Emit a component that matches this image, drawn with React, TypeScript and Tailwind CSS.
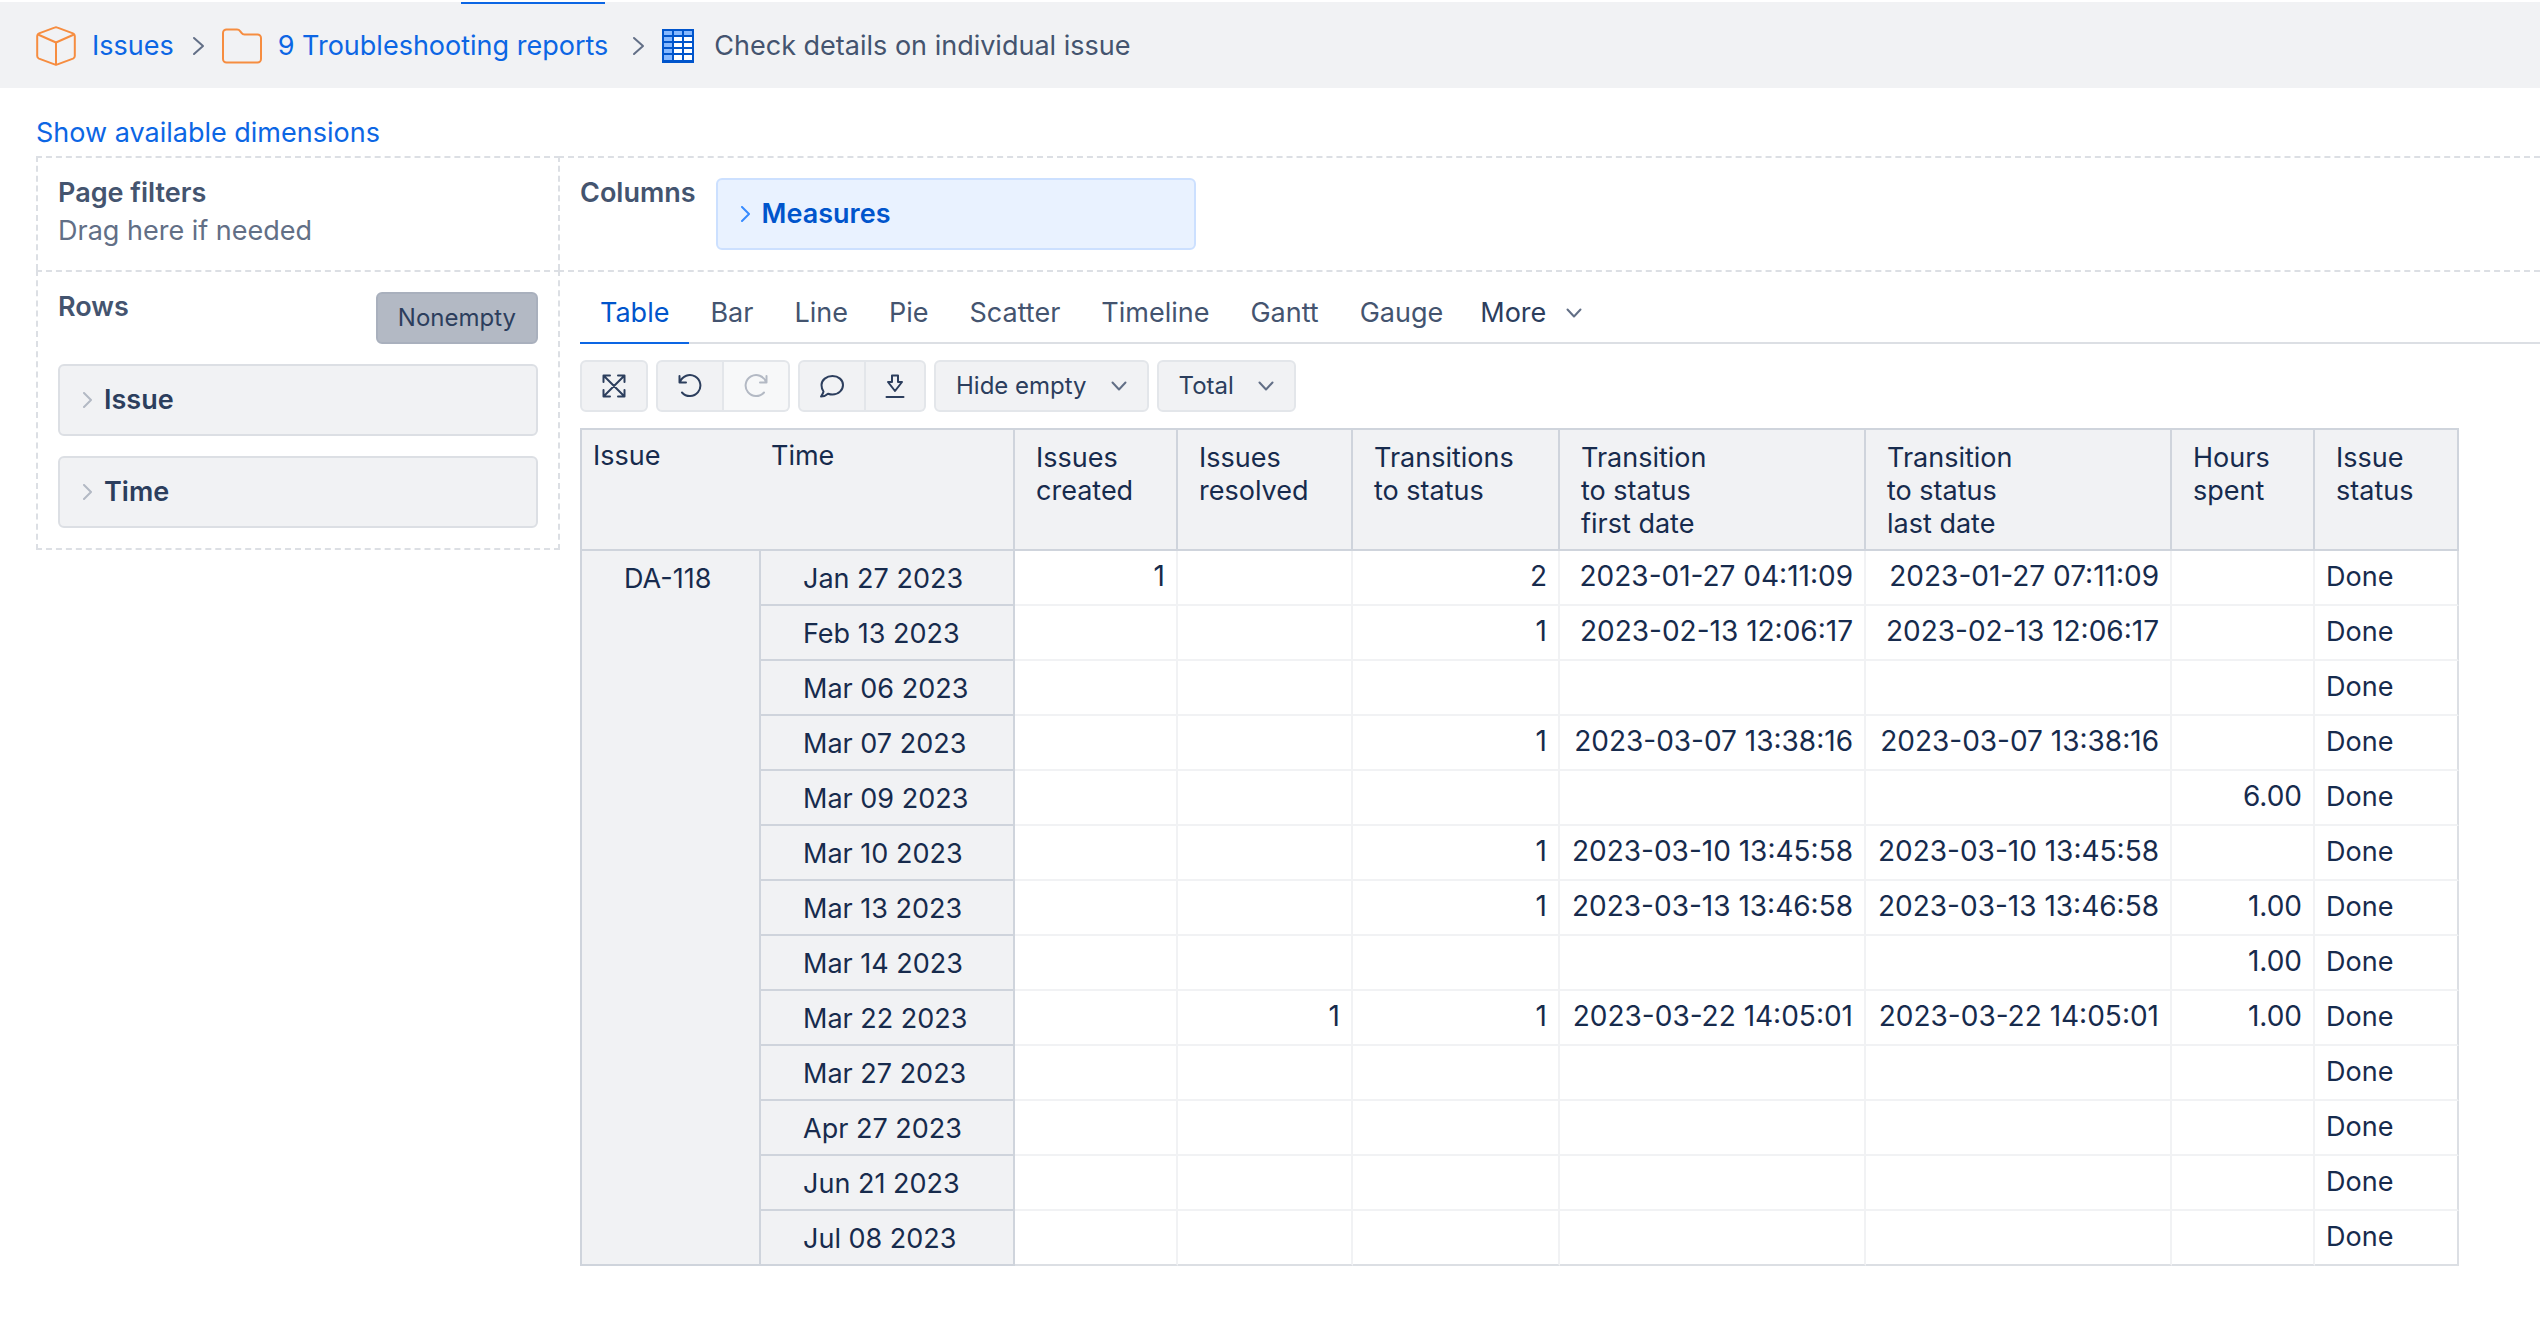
import { useState } from "react";
import type { ReactNode } from "react";

const TABS = ["Table", "Bar", "Line", "Pie", "Scatter", "Timeline", "Gantt", "Gauge"];

const COLUMNS = [
  ["Issues", "created"],
  ["Issues", "resolved"],
  ["Transitions", "to status"],
  ["Transition", "to status", "first date"],
  ["Transition", "to status", "last date"],
  ["Hours", "spent"],
  ["Issue", "status"],
];

// time, created, resolved, transitions, first date, last date, hours
const ROWS = [
  ["Jan 27 2023", "1", "", "2", "2023-01-27 04:11:09", "2023-01-27 07:11:09", ""],
  ["Feb 13 2023", "", "", "1", "2023-02-13 12:06:17", "2023-02-13 12:06:17", ""],
  ["Mar 06 2023", "", "", "", "", "", ""],
  ["Mar 07 2023", "", "", "1", "2023-03-07 13:38:16", "2023-03-07 13:38:16", ""],
  ["Mar 09 2023", "", "", "", "", "", "6.00"],
  ["Mar 10 2023", "", "", "1", "2023-03-10 13:45:58", "2023-03-10 13:45:58", ""],
  ["Mar 13 2023", "", "", "1", "2023-03-13 13:46:58", "2023-03-13 13:46:58", "1.00"],
  ["Mar 14 2023", "", "", "", "", "", "1.00"],
  ["Mar 22 2023", "", "1", "1", "2023-03-22 14:05:01", "2023-03-22 14:05:01", "1.00"],
  ["Mar 27 2023", "", "", "", "", "", ""],
  ["Apr 27 2023", "", "", "", "", "", ""],
  ["Jun 21 2023", "", "", "", "", "", ""],
  ["Jul 08 2023", "", "", "", "", "", ""],
];

function Svg({ className, viewBox, children }: { className: string; viewBox: string; children: ReactNode }) {
  return (
    <svg
      className={className}
      viewBox={viewBox}
      fill="none"
      stroke="currentColor"
      strokeWidth="2"
      strokeLinecap="round"
      strokeLinejoin="round"
      aria-hidden="true"
    >
      {children}
    </svg>
  );
}

function ChevronDown({ className }: { className: string }) {
  return (
    <Svg className={`h-4 w-4 ${className}`} viewBox="0 0 16 16">
      <path d="M1.5 4.5 8 11.5l6.5-7" />
    </Svg>
  );
}

function Separator() {
  return (
    <Svg className="mx-[14px] h-5 w-5 text-[#626f86]" viewBox="0 0 20 20">
      <path d="m6 2 9 8-9 8" />
    </Svg>
  );
}

function Breadcrumbs() {
  return (
    <nav aria-label="Breadcrumb" className="flex h-[84px] items-center bg-[#f1f2f4] pl-9">
      <Svg className="h-10 w-10 text-[#f68d40]" viewBox="0 0 40 40">
        <path d="M18.5 1.6 3 7.4Q1.200 8.200 1.200 10v20q0 1.800 1.800 2.600l15.500 5.800q1.500.6 3 0L37 32.600q1.800-.8 1.800-2.600V10q0-1.800-1.800-2.600L21.500 1.600q-1.500-.6-3 0Z" />
        <path d="M2 8.500 20 16.500l18-8M20 16.500v22" />
      </Svg>
      <a href="#issues" className="ml-4 text-[#0c66e4]">Issues</a>
      <Separator />
      <Svg className="h-10 w-10 text-[#f68d40]" viewBox="0 0 40 40">
        <path d="M5 3.500H15c1.500 0 2.500.7 3.300 1.800l1.200 1.600c.7 1 1.600 1.600 3 1.600H35.500a3.500 3.500 0 0 1 3.500 3.500V33a3.500 3.500 0 0 1-3.500 3.500h-31A3.500 3.500 0 0 1 1 33V7a3.500 3.500 0 0 1 4-3.500Z" />
      </Svg>
      <a href="#folder" className="ml-4 pr-[6px] text-[#0c66e4]">9 Troubleshooting reports</a>
      <Separator />
      <svg className="h-[34px] w-8" viewBox="0 0 32 34" aria-hidden="true">
        <path d="M0 0h32v34H0z" fill="#0055cc" />
        <path d="M2 2h8v4H2zM12 2h8v4h-8zM22 2h8v4h-8zM2 8h8v4H2zM2 14h8v4H2zM2 20h8v4H2zM2 26h8v5H2z" fill="#85b8ff" />
        <path d="M12 8h8v4h-8zM22 8h8v4h-8zM12 14h8v4h-8zM22 14h8v4h-8zM12 20h8v4h-8zM22 20h8v4h-8zM12 26h8v5h-8zM22 26h8v5h-8z" fill="#fff" />
      </svg>
      <span className="ml-5">Check details on individual issue</span>
    </nav>
  );
}

function Dimension({ name, active = false }: { name: string; active?: boolean }) {
  return (
    <button
      type="button"
      className={`flex h-[72px] w-[480px] items-center gap-[10px] rounded-md border-2 pl-[22px] font-semibold ${
        active
          ? "border-[#cce0ff] bg-[#e9f2ff] text-[#0055cc]"
          : "border-[#dcdfe4] bg-[#f1f2f4] text-[#2c3e5d]"
      }`}
    >
      <Svg className={`h-4 w-3 ${active ? "text-[#388bff]" : "text-[#b3b9c4]"}`} viewBox="0 0 12 16">
        <path d="m2 1 7 7-7 7" />
      </Svg>
      {name}
    </button>
  );
}

function ToolButton({ label, className, children }: { label: string; className: string; children: ReactNode }) {
  return (
    <button type="button" aria-label={label} className={`flex h-[52px] items-center justify-center border-2 border-[#e3e6ea] ${className}`}>
      {children}
    </button>
  );
}

function Toolbar() {
  return (
    <div className="mt-4 flex gap-2 text-2xl text-[#2c3e5d]">
      <ToolButton label="Full screen" className="w-[68px] rounded-md bg-[#f1f2f4]">
        <Svg className="h-6 w-6" viewBox="0 0 24 24">
          <path d="M2 2l20 20M22 2 2 22M1.5 8V1.5H8M16 1.5h6.5V8M22.5 16v6.5H16M8 22.5H1.5V16" />
        </Svg>
      </ToolButton>
      <div className="flex">
        <ToolButton label="Undo" className="w-[68px] rounded-l-md bg-[#f1f2f4]">
          <Svg className="h-6 w-6" viewBox="0 0 24 24">
            <path d="M1.5 2v6.500H8M2 8A10.500 10.500 0 1 1 4 18.500" />
          </Svg>
        </ToolButton>
        <ToolButton label="Redo" className="w-[66px] rounded-r-md border-l-0 bg-[#f7f8f9] text-[#b3b9c4]">
          <Svg className="h-6 w-6" viewBox="0 0 24 24">
            <path d="M22.5 2v6.500H16M22 8a10.500 10.500 0 1 0-2 10.500" />
          </Svg>
        </ToolButton>
      </div>
      <div className="flex">
        <ToolButton label="Comments" className="w-[68px] rounded-l-md bg-[#f1f2f4]">
          <Svg className="h-6 w-6" viewBox="0 0 24 24">
            <path d="M12.5 2C18.500 2 23 6 23 11s-4.500 9.500-10.500 9.500c-1.600 0-3-.3-4.500-.8C6 21.500 3.500 22.500 1 22.500c1.200-1.500 2.200-3.200 2.500-5C2 15.500 1.500 13.500 1.500 11c0-5 5-9 11-9Z" />
          </Svg>
        </ToolButton>
        <ToolButton label="Export" className="w-[60px] rounded-r-md border-l-0 bg-[#f1f2f4]">
          <Svg className="h-6 w-6" viewBox="0 0 24 24">
            <path d="M9 1.500h6V8h4l-7 9-7-9h4ZM3.500 23h17" />
          </Svg>
        </ToolButton>
      </div>
      <button type="button" className="flex h-[52px] items-center gap-6 rounded-md border-2 border-[#e3e6ea] bg-[#f1f2f4] px-5">
        Hide empty
        <ChevronDown className="text-[#626f86]" />
      </button>
      <button type="button" className="flex h-[52px] items-center gap-6 rounded-md border-2 border-[#e3e6ea] bg-[#f1f2f4] px-5">
        Total
        <ChevronDown className="text-[#626f86]" />
      </button>
    </div>
  );
}

function ResultTable() {
  return (
    <table className="mt-4 w-[1879px] table-fixed border-separate border-spacing-0 border-t-2 border-l-2 border-[#cfd4dc] text-left text-[#172b4d]">
      <colgroup>
        <col className="w-[179px]" />
        <col className="w-[254px]" />
        <col className="w-[163px]" />
        <col className="w-[175px]" />
        <col className="w-[207px]" />
        <col className="w-[306px]" />
        <col className="w-[306px]" />
        <col className="w-[143px]" />
        <col className="w-[144px]" />
      </colgroup>
      <thead>
        <tr className="h-[121px] bg-[#f1f2f4] align-top leading-[33px]">
          <th className="border-b-2 border-[#cfd4dc] px-[11px] pt-[9px] font-normal">Issue</th>
          <th className="border-r-2 border-b-2 border-[#cfd4dc] px-[10px] pt-[9px] font-normal">Time</th>
          {COLUMNS.map((lines) => (
            <th key={lines.join(" ")} className="border-r-2 border-b-2 border-[#cfd4dc] pt-[11px] pl-[21px] font-normal">
              {lines.map((line) => (
                <span key={line} className="block">{line}</span>
              ))}
            </th>
          ))}
        </tr>
      </thead>
      <tbody>
        {ROWS.map(([time, ...values], i) => {
          const edge = i === ROWS.length - 1 ? "border-b-[#dcdfe4]" : "border-b-[#f1f2f4]";
          return (
            <tr key={time} className="h-[55px] leading-[33px]">
              {i === 0 && (
                <th rowSpan={ROWS.length} className="border-r-2 border-b-2 border-[#cfd4dc] bg-[#f1f2f4] pt-[11px] pl-[42px] align-top font-normal">
                  DA-118
                </th>
              )}
              <th className="border-r-2 border-b-2 border-[#cfd4dc] bg-[#f1f2f4] pt-[11px] pl-[42px] align-top font-normal">{time}</th>
              {values.map((value, j) => (
                <td key={j} className={`border-r-2 border-b-2 border-r-[#f1f2f4] pt-[9px] pr-[11px] text-right align-top text-[28px] whitespace-nowrap ${edge}`}>
                  {value}
                </td>
              ))}
              <td className={`border-r-2 border-b-2 border-r-[#dcdfe4] pt-[9px] pl-[11px] align-top ${edge}`}>Done</td>
            </tr>
          );
        })}
      </tbody>
    </table>
  );
}

export default function App() {
  const [tab, setTab] = useState("Table");

  return (
    <div className="min-h-screen overflow-x-hidden bg-white font-['Inter','Liberation_Sans',sans-serif] text-[27px] leading-[38px] text-[#44546f]">
      <div className="h-[2px]" />
      <div className="bg-[#f1f2f4]">
        <div className="ml-[461px] h-[2px] w-36 bg-[#0c66e4]" />
      </div>
      <Breadcrumbs />

      <main className="pt-[26px] pl-9">
        <a href="#dimensions" className="block w-fit text-[#0c66e4]">Show available dimensions</a>

        <div className="mt-1 grid grid-cols-[524px_1fr]">
          <section className="h-[114px] border-t-2 border-l-2 border-dashed border-[#dcdfe4] px-5 pt-4">
            <h2 className="font-semibold">Page filters</h2>
            <p className="text-[#626f86]">Drag here if needed</p>
          </section>
          <section className="-ml-[2px] flex gap-5 border-t-2 border-l-2 border-dashed border-[#dcdfe4] pl-5">
            <h2 className="pt-4 font-semibold">Columns</h2>
            <div className="pt-5">
              <Dimension name="Measures" active />
            </div>
          </section>

          <section className="h-[280px] border-2 border-dashed border-[#dcdfe4] px-5 pt-5">
            <div className="mb-5 flex items-start justify-between">
              <h2 className="-mt-1 font-semibold">Rows</h2>
              <button type="button" aria-pressed="true" className="h-[52px] rounded-md border-2 border-[#a9b0bd] bg-[#b3b9c4] px-5 text-2xl text-[#2c3e5d]">
                Nonempty
              </button>
            </div>
            <div className="flex flex-col gap-5">
              <Dimension name="Issue" />
              <Dimension name="Time" />
            </div>
          </section>
          <section className="-ml-[2px] border-t-2 border-dashed border-[#dcdfe4] pl-[22px]">
            <div role="tablist" className="flex gap-px border-b-2 border-[#dcdfe4]">
              {TABS.map((name) => (
                <button
                  key={name}
                  type="button"
                  role="tab"
                  aria-selected={name === tab}
                  onClick={() => setTab(name)}
                  className={`-mb-[2px] h-[72px] border-b-2 px-5 pt-3 pb-0 ${
                    name === tab ? "border-[#0c66e4] text-[#0055cc]" : "border-transparent"
                  }`}
                >
                  {name}
                </button>
              ))}
              <button type="button" className="flex h-[70px] items-center gap-5 pt-3 pl-4 text-[#2c3e5d]">
                More
                <ChevronDown className="text-[#626f86]" />
              </button>
            </div>
            <Toolbar />
            <ResultTable />
          </section>
        </div>
      </main>
    </div>
  );
}
